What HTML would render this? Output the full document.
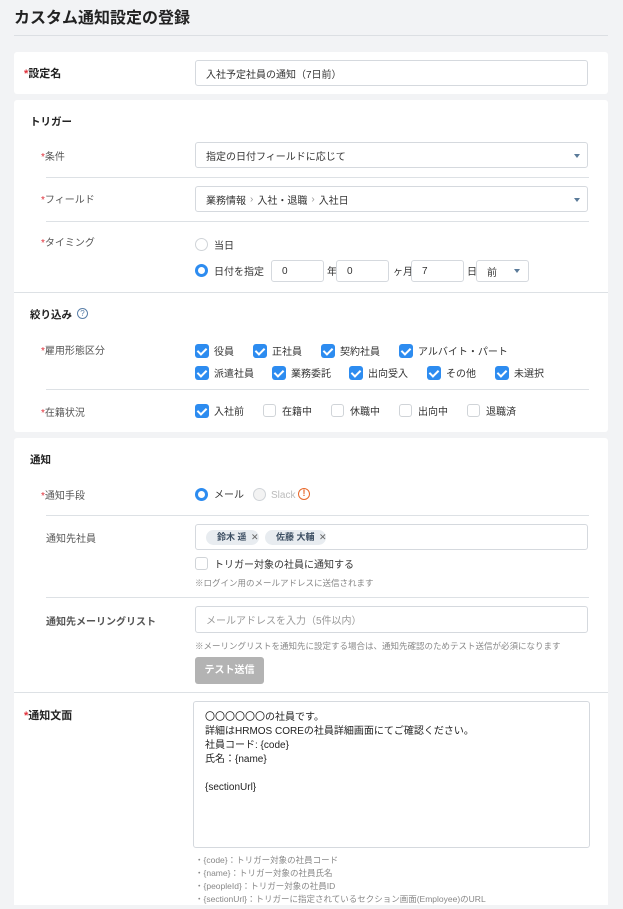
<!DOCTYPE html>
<html><head><meta charset="utf-8"><style>
*{box-sizing:border-box;margin:0;padding:0}
body{width:623px;height:909px;background:#f2f3f5;font-family:"Liberation Sans","Noto Sans CJK JP",sans-serif;color:#333;position:relative;overflow:hidden;font-size:10px}
.a{position:absolute;white-space:nowrap}
.card{position:absolute;left:14px;width:594px;background:#fff;border-radius:3px}
.inp{position:absolute;border:1px solid #d5d9de;border-radius:3px;background:#fff;font-size:10px;color:#333;padding-left:10px;display:flex;align-items:center;white-space:nowrap}
.lbl{font-size:10px;color:#555;line-height:14px;margin-top:3px}
.r{color:#e0303a}
.hr{position:absolute;height:1px;background:#dde1e5}
.cb{position:absolute;width:14px;height:14px;border-radius:3px;background:#2d8cf0}
.cb:after{content:"";position:absolute;left:4px;top:2px;width:4px;height:7px;border:solid #fff;border-width:0 2px 2px 0;transform:rotate(45deg)}
.ce{position:absolute;width:13px;height:13px;border-radius:3px;border:1px solid #d0d4d8;background:#fff}
.t{position:absolute;font-size:10px;color:#333;white-space:nowrap;line-height:14px;margin-top:1.5px}
.caret{position:absolute;width:0;height:0;border-left:3.5px solid transparent;border-right:3.5px solid transparent;border-top:4px solid #5a7a99}
.rad{position:absolute;width:13px;height:13px;border-radius:50%;border:3.5px solid #2d8cf0;background:#fff}
.rade{position:absolute;width:13px;height:13px;border-radius:50%;border:1px solid #d0d4d8;background:#fff}
.chip{position:absolute;height:15px;border-radius:8px;background:#e8ecf0;font-size:9px;font-weight:bold;color:#3d4f63;padding-left:11px;line-height:15px;white-space:nowrap}
.note{font-size:8.5px;color:#888}
</style></head><body>
<div class="a" style="left:14px;top:4px;font-size:16px;font-weight:bold;color:#222">カスタム通知設定の登録</div>
<div class="hr" style="left:14px;top:35px;width:594px;background:#dcdfe3"></div>

<div class="card" style="top:52px;height:42px"></div>
<div class="a" style="left:24px;top:65px;font-size:11px;font-weight:bold;color:#222"><span class="r">*</span>設定名</div>
<div class="inp" style="left:195px;top:60px;width:393px;height:26px">入社予定社員の通知（7日前）</div>

<div class="card" style="top:100px;height:332px"></div>
<div class="a" style="left:30px;top:114px;font-size:10.5px;font-weight:bold;color:#222">トリガー</div>
<div class="a lbl" style="left:41px;top:148px"><span class="r">*</span>条件</div>
<div class="inp" style="left:195px;top:142px;width:393px;height:26px">指定の日付フィールドに応じて</div>
<div class="caret" style="left:574px;top:154px"></div>
<div class="hr" style="left:46px;top:177px;width:543px"></div>
<div class="a lbl" style="left:41px;top:191px"><span class="r">*</span>フィールド</div>
<div class="inp" style="left:195px;top:186px;width:393px;height:26px">業務情報 <span style="color:#999;margin:0 4px">›</span> 入社・退職 <span style="color:#999;margin:0 4px">›</span> 入社日</div>
<div class="caret" style="left:574px;top:198px"></div>
<div class="hr" style="left:46px;top:221px;width:543px"></div>
<div class="a lbl" style="left:41px;top:234px"><span class="r">*</span>タイミング</div>
<div class="rade" style="left:195px;top:238px"></div>
<div class="t" style="left:214px;top:238px">当日</div>
<div class="rad" style="left:195px;top:264px"></div>
<div class="t" style="left:214px;top:264px">日付を指定</div>
<div class="inp" style="left:271px;top:260px;width:53px;height:22px">0</div>
<div class="t" style="left:327px;top:264px">年</div>
<div class="inp" style="left:336px;top:260px;width:53px;height:22px">0</div>
<div class="t" style="left:393px;top:264px">ヶ月</div>
<div class="inp" style="left:411px;top:260px;width:53px;height:22px">7</div>
<div class="t" style="left:467px;top:264px">日</div>
<div class="inp" style="left:476px;top:260px;width:53px;height:22px">前</div>
<div class="caret" style="left:514px;top:269px"></div>
<div class="hr" style="left:14px;top:292px;width:594px"></div>

<div class="a" style="left:30px;top:307px;font-size:10.5px;font-weight:bold;color:#222">絞り込み</div>
<div class="a" style="left:77px;top:308px;width:11px;height:11px;border:1px solid #5a7fa8;border-radius:50%;font-size:8px;color:#5a7fa8;text-align:center;line-height:9px">?</div>
<div class="a lbl" style="left:41px;top:342px"><span class="r">*</span>雇用形態区分</div>
<div class="cb" style="left:195px;top:344px"></div><div class="t" style="left:214px;top:344px">役員</div>
<div class="cb" style="left:253px;top:344px"></div><div class="t" style="left:272px;top:344px">正社員</div>
<div class="cb" style="left:321px;top:344px"></div><div class="t" style="left:340px;top:344px">契約社員</div>
<div class="cb" style="left:399px;top:344px"></div><div class="t" style="left:418px;top:344px">アルバイト・パート</div>
<div class="cb" style="left:195px;top:366px"></div><div class="t" style="left:214px;top:366px">派遣社員</div>
<div class="cb" style="left:272px;top:366px"></div><div class="t" style="left:291px;top:366px">業務委託</div>
<div class="cb" style="left:349px;top:366px"></div><div class="t" style="left:368px;top:366px">出向受入</div>
<div class="cb" style="left:427px;top:366px"></div><div class="t" style="left:446px;top:366px">その他</div>
<div class="cb" style="left:495px;top:366px"></div><div class="t" style="left:514px;top:366px">未選択</div>
<div class="hr" style="left:46px;top:389px;width:543px"></div>
<div class="a lbl" style="left:41px;top:404px"><span class="r">*</span>在籍状況</div>
<div class="cb" style="left:195px;top:404px"></div><div class="t" style="left:214px;top:404px">入社前</div>
<div class="ce" style="left:263px;top:404px"></div><div class="t" style="left:282px;top:404px">在籍中</div>
<div class="ce" style="left:331px;top:404px"></div><div class="t" style="left:350px;top:404px">休職中</div>
<div class="ce" style="left:399px;top:404px"></div><div class="t" style="left:418px;top:404px">出向中</div>
<div class="ce" style="left:467px;top:404px"></div><div class="t" style="left:486px;top:404px">退職済</div>

<div class="card" style="top:438px;height:471px"></div>
<div class="a" style="left:30px;top:452px;font-size:10.5px;font-weight:bold;color:#222">通知</div>
<div class="a lbl" style="left:41px;top:487px"><span class="r">*</span>通知手段</div>
<div class="rad" style="left:195px;top:488px"></div><div class="t" style="left:214px;top:487px">メール</div>
<div class="rade" style="left:253px;top:488px;background:#f3f3f3"></div><div class="t" style="left:271px;top:487px;color:#bbb">Slack</div>
<div class="a" style="left:298px;top:488px;width:12px;height:12px;border:1.5px solid #e8682a;border-radius:50%;color:#e8682a;font-size:9px;font-weight:bold;text-align:center;line-height:9px">!</div>
<div class="hr" style="left:46px;top:515px;width:543px"></div>
<div class="a lbl" style="left:46px;top:530px">通知先社員</div>
<div class="inp" style="left:195px;top:524px;width:393px;height:26px"></div>
<div class="chip" style="left:206px;top:530px;width:53px">鈴木 遥 <span style="font-weight:normal;color:#666;margin-left:2px">✕</span></div>
<div class="chip" style="left:265px;top:530px;width:61px">佐藤 大輔 <span style="font-weight:normal;color:#666;margin-left:2px">✕</span></div>
<div class="ce" style="left:195px;top:557px"></div><div class="t" style="left:214px;top:557px">トリガー対象の社員に通知する</div>
<div class="a note" style="left:195px;top:577px">※ログイン用のメールアドレスに送信されます</div>
<div class="hr" style="left:46px;top:597px;width:543px"></div>
<div class="a lbl" style="left:46px;top:613px;font-weight:bold;color:#555">通知先メーリングリスト</div>
<div class="inp" style="left:195px;top:606px;width:393px;height:27px;color:#999">メールアドレスを入力（5件以内）</div>
<div class="a note" style="left:195px;top:640px">※メーリングリストを通知先に設定する場合は、通知先確認のためテスト送信が必須になります</div>
<div class="a" style="left:195px;top:657px;width:69px;height:27px;background:#b3b3b3;border-radius:3px;color:#fff;font-size:10px;font-weight:bold;text-align:center;line-height:27px">テスト送信</div>
<div class="hr" style="left:14px;top:692px;width:594px"></div>

<div class="a" style="left:24px;top:707px;font-size:11px;font-weight:bold;color:#222"><span class="r">*</span>通知文面</div>
<div class="a" style="left:193px;top:701px;width:397px;height:147px;border:1px solid #d5d9de;border-radius:3px;padding:9px 11px;font-size:10px;line-height:14px;color:#222;white-space:pre">〇〇〇〇〇〇の社員です。
詳細はHRMOS COREの社員詳細画面にてご確認ください。
社員コード: {code}
氏名：{name}

{sectionUrl}</div>
<div class="a note" style="left:195px;top:854px;line-height:13px;color:#888">・{code}：トリガー対象の社員コード<br>・{name}：トリガー対象の社員氏名<br>・{peopleId}：トリガー対象の社員ID<br>・{sectionUrl}：トリガーに指定されているセクション画面(Employee)のURL</div>
<div class="a" style="left:0;top:905px;width:623px;height:4px;background:#f2f3f5"></div>
</body></html>
